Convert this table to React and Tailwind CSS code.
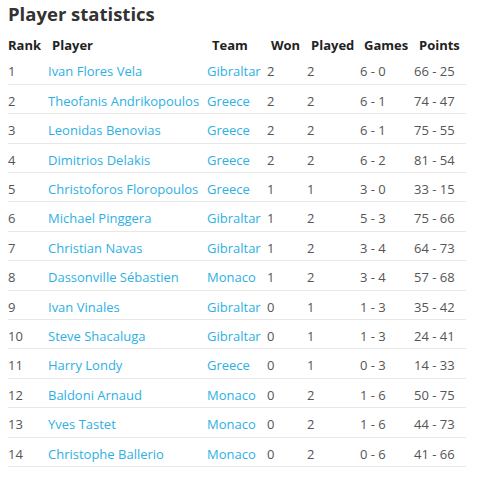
const players = [
  { rank: 1, name: "Ivan Flores Vela", team: "Gibraltar", won: 2, played: 2, games: "6 - 0", points: "66 - 25" },
  { rank: 2, name: "Theofanis Andrikopoulos", team: "Greece", won: 2, played: 2, games: "6 - 1", points: "74 - 47" },
  { rank: 3, name: "Leonidas Benovias", team: "Greece", won: 2, played: 2, games: "6 - 1", points: "75 - 55" },
  { rank: 4, name: "Dimitrios Delakis", team: "Greece", won: 2, played: 2, games: "6 - 2", points: "81 - 54" },
  { rank: 5, name: "Christoforos Floropoulos", team: "Greece", won: 1, played: 1, games: "3 - 0", points: "33 - 15" },
  { rank: 6, name: "Michael Pinggera", team: "Gibraltar", won: 1, played: 2, games: "5 - 3", points: "75 - 66" },
  { rank: 7, name: "Christian Navas", team: "Gibraltar", won: 1, played: 2, games: "3 - 4", points: "64 - 73" },
  { rank: 8, name: "Dassonville Sébastien", team: "Monaco", won: 1, played: 2, games: "3 - 4", points: "57 - 68" },
  { rank: 9, name: "Ivan Vinales", team: "Gibraltar", won: 0, played: 1, games: "1 - 3", points: "35 - 42" },
  { rank: 10, name: "Steve Shacaluga", team: "Gibraltar", won: 0, played: 1, games: "1 - 3", points: "24 - 41" },
  { rank: 11, name: "Harry Londy", team: "Greece", won: 0, played: 1, games: "0 - 3", points: "14 - 33" },
  { rank: 12, name: "Baldoni Arnaud", team: "Monaco", won: 0, played: 2, games: "1 - 6", points: "50 - 75" },
  { rank: 13, name: "Yves Tastet", team: "Monaco", won: 0, played: 2, games: "1 - 6", points: "44 - 73" },
  { rank: 14, name: "Christophe Ballerio", team: "Monaco", won: 0, played: 2, games: "0 - 6", points: "41 - 66" },
];

const App = () => {
  return (
    <div className="min-h-screen bg-white px-2 pt-[3px] font-['Open_Sans',sans-serif]">
      {/* Title */}
      <h1 className="text-[18.5px] leading-[22px] font-bold text-[#333]">Player statistics</h1>

      {/* Stats table */}
      <table className="mt-[6px] w-[458px] table-fixed border-collapse text-[13px] leading-[20.4px]">
        <thead>
          <tr className="text-left font-bold text-[#222]">
            <th className="w-[40px] pt-1 font-bold">Rank</th>
            <th className="w-[159px] pt-1 pl-1 font-bold">Player</th>
            <th className="w-[60px] pt-1 pl-[5px] font-bold">Team</th>
            <th className="w-[40px] pt-1 pl-1 font-bold">Won</th>
            <th className="w-[53px] pt-1 pl-1 font-bold">Played</th>
            <th className="w-[54px] pt-1 pl-1 font-bold">Games</th>
            <th className="w-[52px] pt-1 pl-[5px] font-bold">Points</th>
          </tr>
        </thead>
        <tbody>
          {players.map((p) => (
            <tr key={p.rank} className="border-b border-[#e8e8e8] text-[#555]">
              <td className="pt-[6px] pb-[2px]">{p.rank}</td>
              <td className="pt-[6px] pb-[2px] text-[#2eb0e4] whitespace-nowrap">{p.name}</td>
              <td className="pt-[6px] pb-[2px] text-[#2eb0e4]">{p.team}</td>
              <td className="pt-[6px] pb-[2px]">{p.won}</td>
              <td className="pt-[6px] pb-[2px]">{p.played}</td>
              <td className="pt-[6px] pb-[2px]">{p.games}</td>
              <td className="pt-[6px] pb-[2px]">{p.points}</td>
            </tr>
          ))}
        </tbody>
      </table>
    </div>
  );
};

export default App;
